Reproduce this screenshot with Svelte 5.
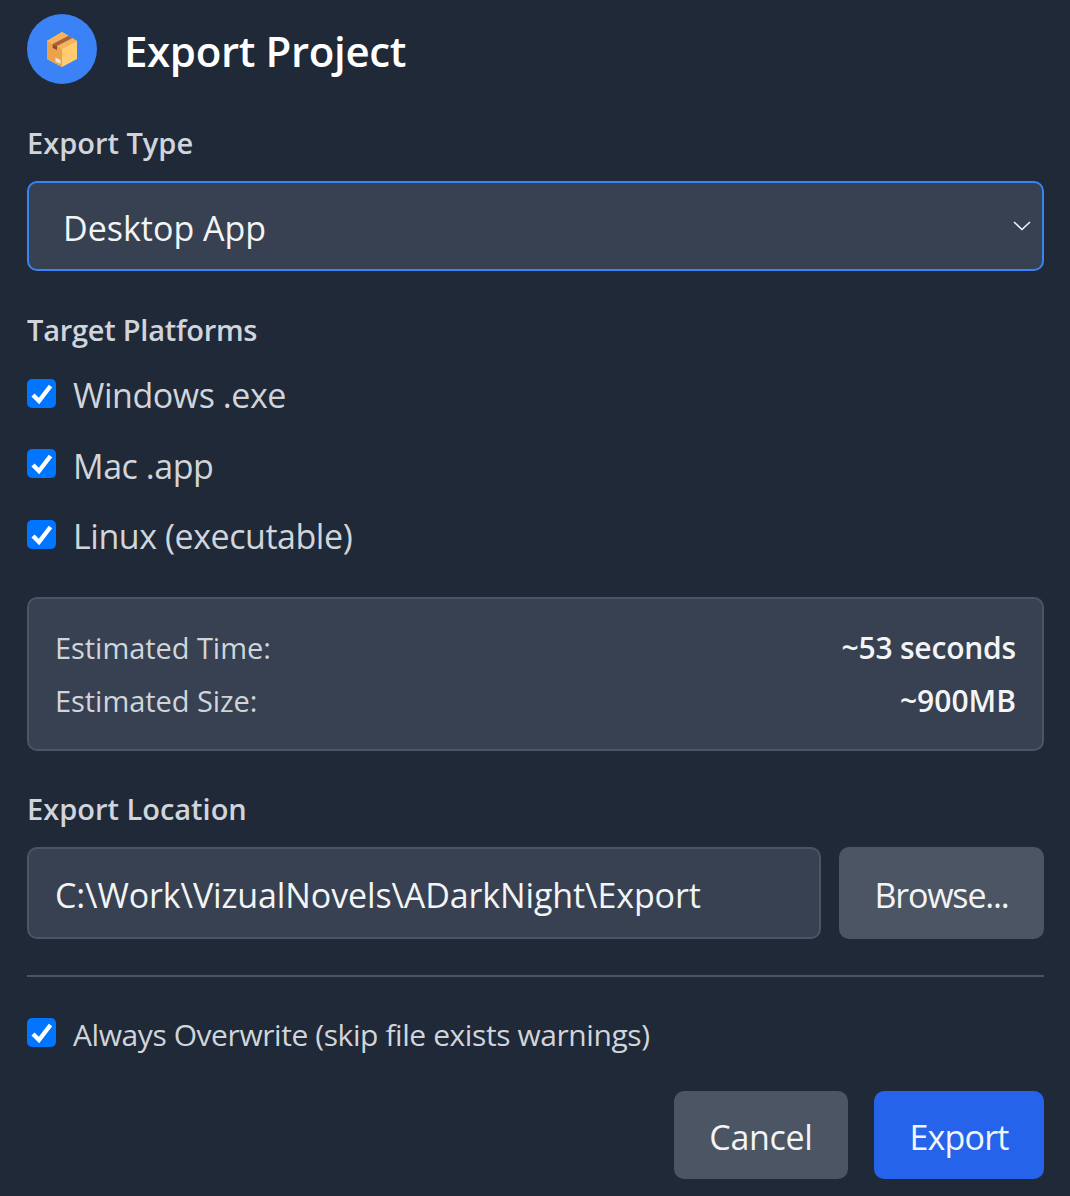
<script>
  let exportType = $state('Desktop App');
  let path = $state('C:\\Work\\VizualNovels\\ADarkNight\\Export');
  let overwrite = $state(true);
  let platforms = $state([
    { label: 'Windows .exe', checked: true },
    { label: 'Mac .app', checked: true },
    { label: 'Linux (executable)', checked: true }
  ]);
</script>

<div class="dialog">
  <header>
    <div class="badge">
      <svg width="36" height="37" viewBox="0 0 36 37">
        <path d="M18 1 33 10 33 28 18 36 3 28 3 10Z" fill="#ffcc70" />
        <path d="M18 1 3 10 18 18 33 10Z" fill="#f4b35c" />
        <path d="M3 10 18 18 18 36 3 28Z" fill="#eda24a" />
        <path d="M8.7 13 24.5 4.7 28.5 7 13 15Z" fill="#a5623c" />
        <path d="M8.7 13 13 15 13 19 8.7 17Z" fill="#8a4c30" />
        <path d="M11.5 26.5 16.5 29 16.5 33 11.5 30.5Z" fill="#e8e4dc" />
      </svg>
    </div>
    <h1>Export Project</h1>
  </header>

  <label class="section" for="type">Export Type</label>
  <div class="select-wrap">
    <select id="type" bind:value={exportType}>
      <option>Desktop App</option>
      <option>Web Build</option>
    </select>
    <svg class="chevron" width="20" height="12" viewBox="0 0 20 12">
      <path d="M2 2 10 9.5 18 2" fill="none" stroke="#f3f4f6" stroke-width="1.6" />
    </svg>
  </div>

  <div class="section platforms-title">Target Platforms</div>
  <div class="platforms">
    {#each platforms as p}
      <label class="check">
        <input type="checkbox" bind:checked={p.checked} />
        <span>{p.label}</span>
      </label>
    {/each}
  </div>

  <div class="estimate">
    <div class="row"><span>Estimated Time:</span><b>~53 seconds</b></div>
    <div class="row"><span>Estimated Size:</span><b>~900MB</b></div>
  </div>

  <label class="section" for="loc">Export Location</label>
  <div class="location">
    <input id="loc" type="text" bind:value={path} />
    <button class="btn browse">Browse...</button>
  </div>

  <hr />

  <label class="check small">
    <input type="checkbox" bind:checked={overwrite} />
    <span>Always Overwrite (skip file exists warnings)</span>
  </label>

  <footer>
    <button class="btn action">Cancel</button>
    <button class="btn action primary">Export</button>
  </footer>
</div>

<style>
  :global(body) {
    background: #1f2937;
  }

  .dialog {
    box-sizing: border-box;
    height: 1196px;
    padding: 14px 26px 0 27px;
    background: #1f2937;
    font-family: "Open Sans", "Noto Sans", sans-serif;
    color: #f3f4f6;
    overflow: hidden;
  }

  header {
    display: flex;
    align-items: center;
    gap: 27px;
    height: 70px;
  }

  .badge {
    width: 70px;
    height: 70px;
    border-radius: 50%;
    background: #3b82f6;
    display: flex;
    align-items: center;
    justify-content: center;
  }

  h1 {
    margin: 0;
    padding-top: 2px;
    font-size: 42px;
    font-weight: 600;
    letter-spacing: -0.35px;
    color: #fff;
  }

  .section {
    display: block;
    font-size: 29px;
    font-weight: 600;
    letter-spacing: 0;
    line-height: 38px;
    color: #d1d5db;
    margin-top: 40px;
    margin-bottom: 19px;
  }

  .select-wrap {
    position: relative;
  }

  select {
    appearance: none;
    display: block;
    box-sizing: border-box;
    width: 100%;
    height: 90px;
    padding: 3px 34px 0;
    background: #374151;
    border: 2px solid #3b82f6;
    border-radius: 10px;
    color: #f3f4f6;
    font: inherit;
    font-size: 34px;
  }

  .chevron {
    position: absolute;
    right: 12px;
    top: 39px;
    pointer-events: none;
  }

  .platforms-title {
    margin-top: 40px;
    margin-bottom: 0;
    letter-spacing: -0.25px;
  }

  .platforms {
    display: flex;
    flex-direction: column;
    gap: 22.5px;
    margin-top: 22px;
  }

  .check {
    display: flex;
    align-items: center;
    gap: 18px;
    height: 48px;
    font-size: 34px;
    letter-spacing: -0.45px;
    color: #d1d5db;
  }

  .check input {
    appearance: none;
    flex: none;
    box-sizing: border-box;
    width: 29px;
    height: 29px;
    margin: 0 -1px 0 0;
    position: relative;
    top: -2px;
    border-radius: 5px;
    background: #0075ff;
  }

  .check input:checked {
    background: #0075ff url("data:image/svg+xml,%3Csvg xmlns='http://www.w3.org/2000/svg' viewBox='0 0 29 29'%3E%3Cpath d='M6 16 12 22 23.5 7' fill='none' stroke='white' stroke-width='4.4'/%3E%3C/svg%3E") center / 100% no-repeat;
  }

  .estimate {
    box-sizing: border-box;
    height: 154px;
    margin-top: 37px;
    padding: 28px 26px;
    background: #374151;
    border: 2px solid #4b5563;
    border-radius: 10px;
    display: flex;
    flex-direction: column;
    gap: 11px;
    font-size: 29px;
    letter-spacing: -0.05px;
    color: #d1d5db;
  }

  .row {
    display: flex;
    justify-content: space-between;
    line-height: 42px;
  }

  .row b {
    font-size: 30px;
    font-weight: 600;
    letter-spacing: 0;
    color: #f3f4f6;
  }

  .row:first-child b {
    letter-spacing: -0.2px;
  }

  .estimate + .section {
    margin-top: 39px;
    margin-bottom: 19px;
  }

  .location {
    display: flex;
    gap: 18px;
  }

  .location input {
    box-sizing: border-box;
    flex: 1;
    min-width: 0;
    height: 92px;
    padding: 3px 26px 0;
    background: #374151;
    border: 2px solid #4b5563;
    border-radius: 10px;
    color: #f3f4f6;
    font: inherit;
    font-size: 34px;
    letter-spacing: -0.12px;
  }

  .btn {
    box-sizing: border-box;
    height: 92px;
    width: 205px;
    padding: 3px 0 0;
    background: #4b5563;
    border: none;
    border-radius: 10px;
    color: #f3f4f6;
    font: inherit;
    font-size: 34px;
    letter-spacing: -0.3px;
  }

  .browse {
    letter-spacing: -1.2px;
  }

  hr {
    border: none;
    height: 2px;
    background: #4b5563;
    margin: 36px 0 0;
  }

  .small {
    margin-top: 33px;
    font-size: 30px;
    letter-spacing: -0.42px;
  }

  footer {
    display: flex;
    justify-content: flex-end;
    gap: 26px;
    margin-top: 33px;
  }

  .action {
    height: 88px;
    width: 174px;
  }

  .primary {
    width: 170px;
    background: #2563eb;
    letter-spacing: -0.8px;
  }
</style>
